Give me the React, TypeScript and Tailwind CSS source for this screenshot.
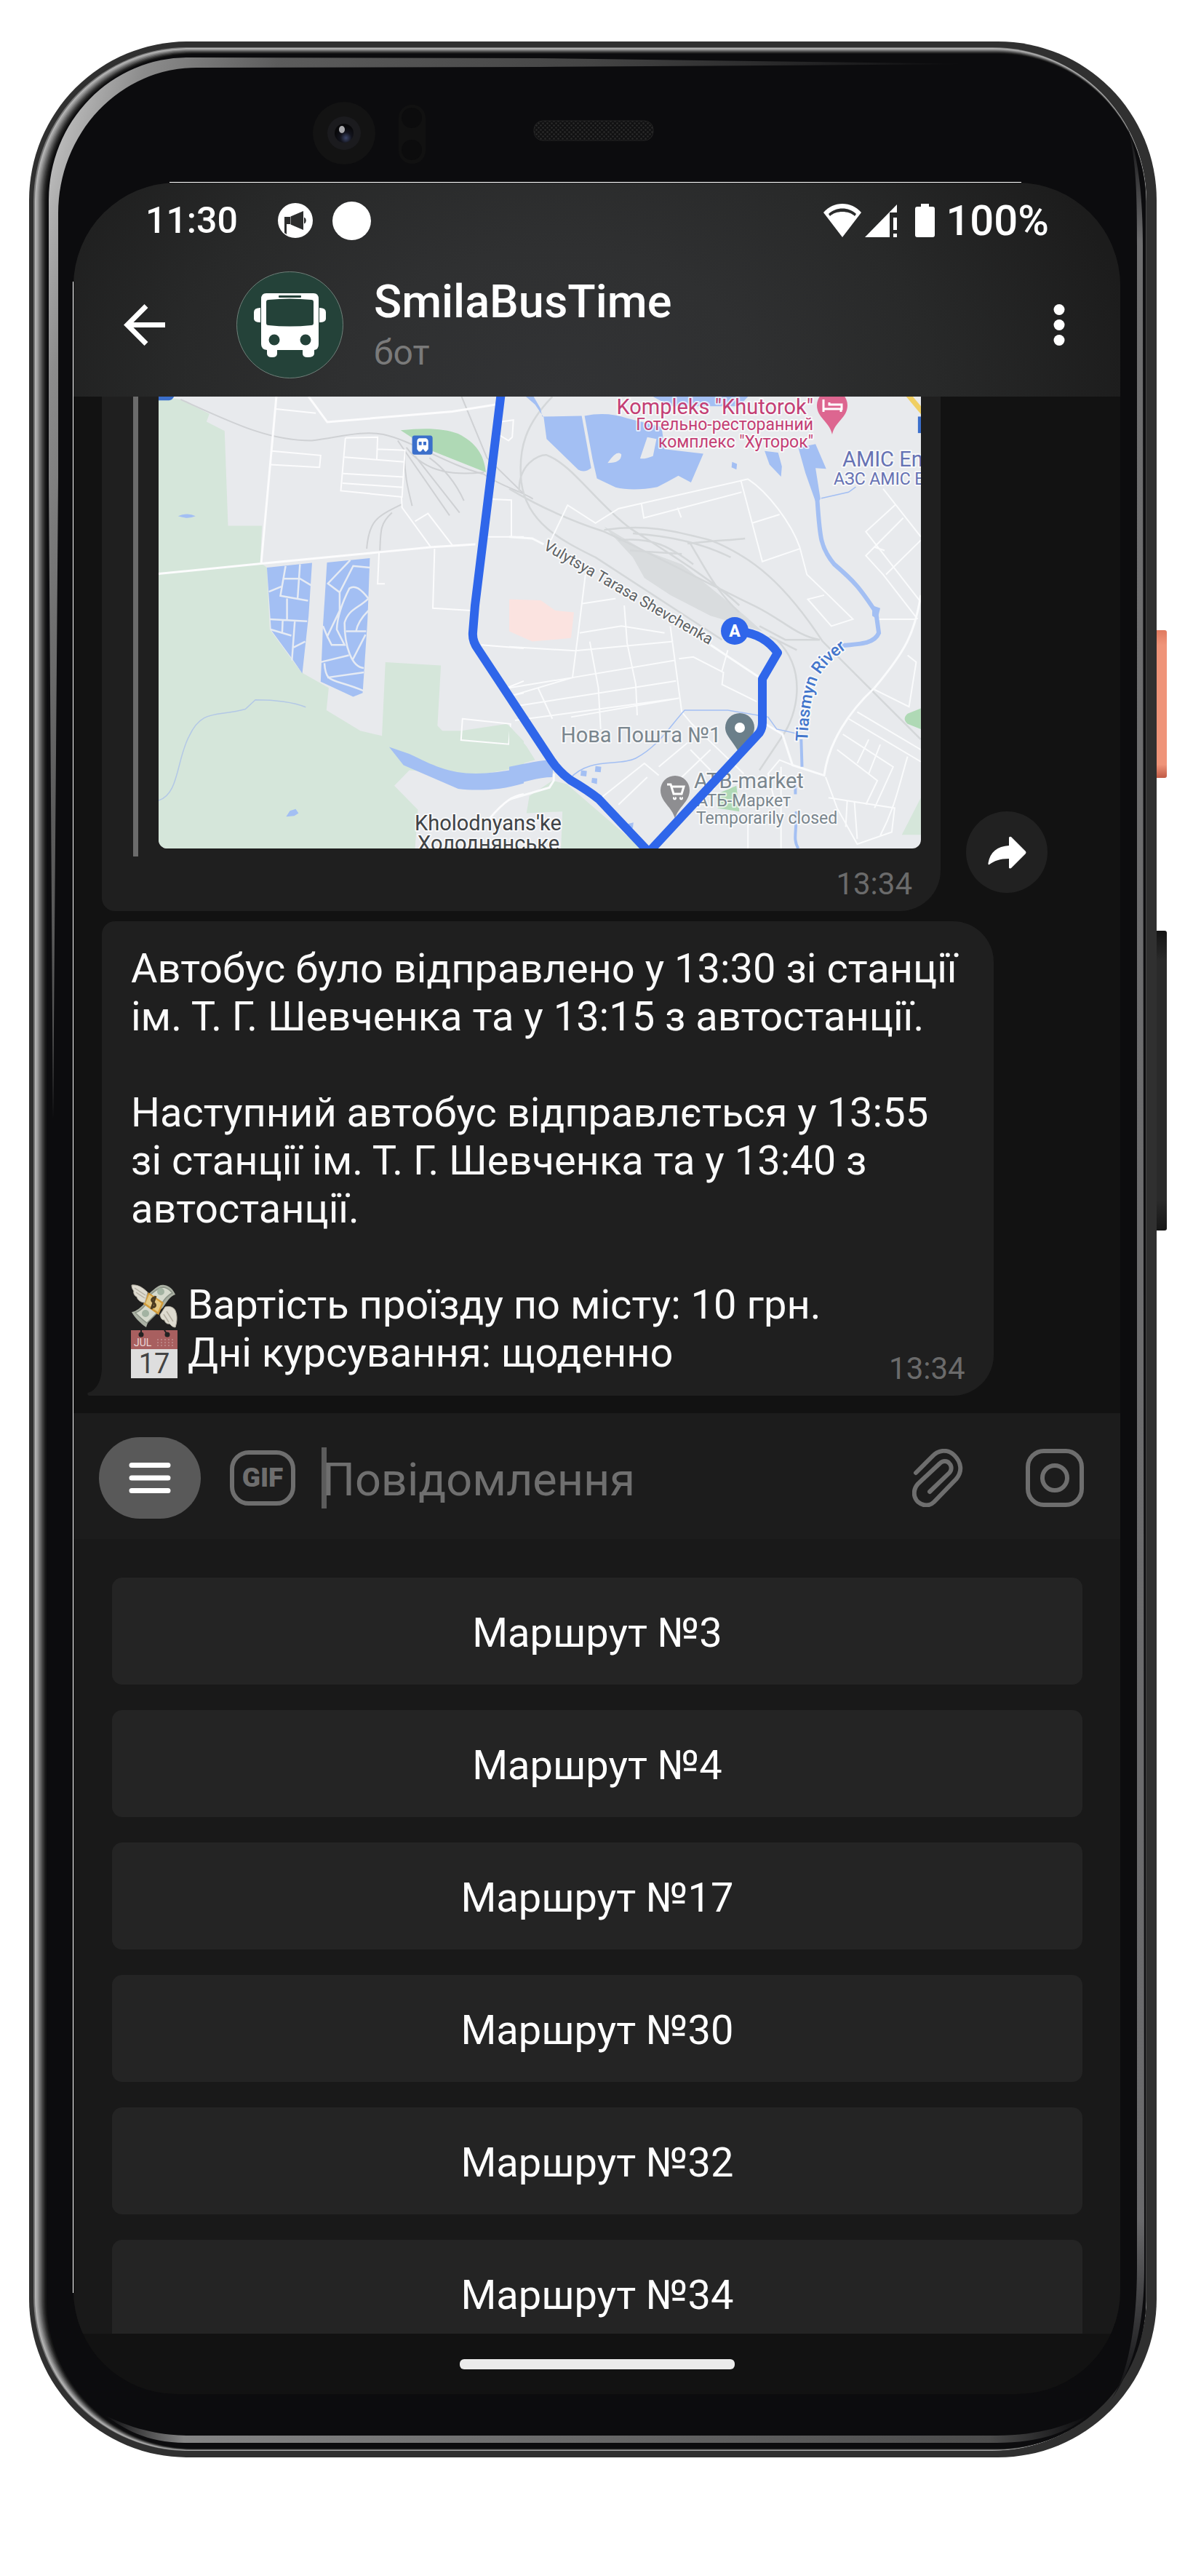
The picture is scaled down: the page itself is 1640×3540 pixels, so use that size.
import type { ReactNode } from "react";

const routes = ["3", "4", "17", "30", "32", "34"];

/* Concentric layers that shade the rim of the glass from light metal to black. */
const rimShades = [
  "#777777", "#b4b4b4", "#a2a2a2", "#8a8a8a", "#6f6f6f", "#555555", "#3c3c3c", "#262626", "#161616", "#0c0c0e",
];

function DeviceShell() {
  return (
    <svg
      className="absolute inset-0 h-full w-full"
      viewBox="0 0 1550 3320"
      preserveAspectRatio="none"
      aria-hidden="true"
    >
      <defs>
        <linearGradient id="glossLeft" gradientUnits="userSpaceOnUse" x1="0" y1="0" x2="1193" y2="358">
          <stop offset="0.06" stopColor="#bcbcbc" />
          <stop offset="0.13" stopColor="#8c8c8c" />
          <stop offset="0.27" stopColor="#5c5c5c" />
          <stop offset="0.6" stopColor="#454545" />
          <stop offset="1" stopColor="#0c0c0e" />
        </linearGradient>
        <linearGradient id="glossBottom" x1="0" x2="1" y1="0" y2="0">
          <stop offset="0" stopColor="#0c0c0e" />
          <stop offset="0.08" stopColor="#858585" />
          <stop offset="0.9" stopColor="#4c4c4c" />
          <stop offset="1" stopColor="#0c0c0e" />
        </linearGradient>
        <linearGradient id="glossRight" x1="0" x2="0" y1="0" y2="1">
          <stop offset="0" stopColor="#0c0c0e" />
          <stop offset="0.05" stopColor="#6e6e6f" />
          <stop offset="0.92" stopColor="#6a6a6c" />
          <stop offset="1" stopColor="#0c0c0e" />
        </linearGradient>
        <radialGradient id="lens" cx="0.6" cy="0.75" r="0.6">
          <stop offset="0" stopColor="#3c4668" />
          <stop offset="0.5" stopColor="#12131c" />
          <stop offset="1" stopColor="#08080a" />
        </radialGradient>
        <pattern id="mesh" width="6" height="6" patternUnits="userSpaceOnUse">
          <rect width="6" height="6" fill="#111112" />
          <circle cx="1.5" cy="1.5" r="1.3" fill="#2a2a2a" />
          <circle cx="4.5" cy="4.5" r="1.3" fill="#2a2a2a" />
        </pattern>
      </defs>
      {rimShades.map((shade, i) => (
        <rect
          key={shade}
          x={6 + 2 * i}
          y={8 + i}
          width={1530 - 2 * i - i / 9}
          height={3303 - i - i / 3}
          rx={212 - i}
          fill={shade}
        />
      ))}
      <path
        d="M33 1480L27 600V218A191 196 0 0 1 218 22L700 23L1300 31L700 35L230 36A190 200 0 0 0 40 236V600Z"
        fill="url(#glossLeft)"
      />
      <path
        d="M1510 118C1522 160 1523 210 1523 280V3060C1523 3140 1510 3210 1486 3243C1518 3200 1533 3140 1533 3060L1531 280C1531 200 1522 150 1510 118Z"
        fill="url(#glossRight)"
      />
      <path
        d="M104 3262C150 3285 190 3290 220 3290H1330C1390 3290 1430 3275 1455 3262C1430 3285 1390 3300 1330 3300H215C160 3300 130 3280 104 3262Z"
        fill="url(#glossBottom)"
      />
      <circle cx="433" cy="126" r="43" fill="#131313" />
      <circle cx="433" cy="126" r="23" fill="#1b1b1e" />
      <circle cx="433" cy="126" r="13" fill="url(#lens)" />
      <ellipse cx="430" cy="121" rx="4" ry="5" fill="#a9a9ac" />
      <rect x="508" y="87" width="37" height="81" rx="18" fill="#111111" />
      <circle cx="526" cy="105" r="14" fill="#0c0c0d" />
      <circle cx="526" cy="149" r="14" fill="#0c0c0d" />
      <rect x="694" y="109" width="164" height="27" rx="12" fill="url(#mesh)" stroke="#232323" />
      <rect x="193" y="193" width="1171" height="1" fill="#ffffff" />
      <rect x="60" y="330" width="1" height="2764" fill="#ffffff" />
    </svg>
  );
}

function StatusBar() {
  return (
    <div className="flex items-center pt-[20px] pr-[98px] pl-[99px] font-medium text-white">
      <span className="w-[182px] text-[50px] leading-[64px]">11:30</span>
      <svg className="mr-[27px] h-[48px] w-[48px]" viewBox="0 0 48 48" aria-hidden="true">
        <circle cx="24" cy="24" r="24" fill="#fff" />
        <path d="M9 19H17V29H12V43L9 41Z" fill="#2c2d2d" />
        <path d="M17.500 18.500L35 11V37L17.500 29.500Z" fill="#2c2d2d" />
        <path d="M36 19.500A5 5 0 0 1 36 28.500Z" fill="#2c2d2d" />
      </svg>
      <span className="h-[53px] w-[53px] rounded-full bg-white" />
      <div className="ml-auto flex items-center">
        <svg className="h-[46px] w-[52px]" viewBox="0 0 52 46" aria-hidden="true">
          <path d="M26 0C16 0 7 4 0 12L26 46L52 12C45 4 36 0 26 0Z" fill="#fff" />
          <path d="M7 14C17 4 35 4 45 14L43 17C35 9 17 9 9 17Z" fill="#2b2c2c" />
        </svg>
        <svg className="ml-[5px] h-[46px] w-[45px]" viewBox="0 0 45 46" aria-hidden="true">
          <path d="M0 46L44 1V12H34V46Z" fill="#fff" />
          <path d="M39 19H44V36H39ZM39 41H44V46H39Z" fill="#fff" />
        </svg>
        <svg className="ml-[24px] h-[46px] w-[27px]" viewBox="0 0 27 46" aria-hidden="true">
          <path d="M8 0H19V4H24Q27 4 27 7V43Q27 46 24 46H3Q0 46 0 43V7Q0 4 3 4H8Z" fill="#fff" />
        </svg>
        <span className="ml-[15px] text-[58px] leading-[64px]">100%</span>
      </div>
    </div>
  );
}

function BusAvatar() {
  return (
    <svg className="h-[147px] w-[147px] shrink-0" viewBox="0 0 147 147" role="img" aria-label="SmilaBusTime">
      <circle cx="73.500" cy="73.500" r="73" fill="#244239" stroke="#6f7f79" />
      <path
        fill="#fff"
        d="M41 30H106Q113 30 113 38V100Q113 107 107 108V113Q107 118 98 118Q91 118 91 113V108H56V113Q56 118 49 118Q42 118 42 113V108Q34 107 34 100V38Q34 30 41 30Z"
      />
      <path fill="#fff" d="M33 50Q24 50 24 56V65Q24 70 33 70ZM114 50Q123 50 123 56V65Q123 70 114 70Z" />
      <path fill="#244239" d="M44 39Q73 36 103 39Q106 39 106 42V71Q106 74 103 74Q73 77 44 74Q41 74 41 71V42Q41 39 44 39Z" />
      <rect x="58" y="33" width="31" height="3" rx="1" fill="#244239" />
      <circle cx="52" cy="94" r="7.500" fill="#244239" />
      <circle cx="95" cy="94" r="7.500" fill="#244239" />
    </svg>
  );
}

function ChatHeader() {
  return (
    <header className="bg-[radial-gradient(56%_200%_at_46%_100%,#323335_0%,#2f3031_35%,#282929_65%,#1c1c1c_100%)] pb-[25px]">
      <StatusBar />
      <div className="flex items-center pt-[38px] pr-[74px] pl-[69px]">
        <button type="button" aria-label="Назад" className="mr-[98px] h-[57px] w-[57px]">
          <svg viewBox="0 0 57 57" fill="none" stroke="#fff" strokeWidth="7" aria-hidden="true">
            <path d="M57 28.500H6M31 2.500L5 28.500L31 54.500" />
          </svg>
        </button>
        <BusAvatar />
        <div className="ml-[42px] flex-1">
          <h1 className="text-[63px] leading-[76px] font-medium text-white">SmilaBusTime</h1>
          <p className="text-[48px] leading-[64px] text-[#7a7a7a]">бот</p>
        </div>
        <button type="button" aria-label="Меню чату" className="h-[57px] w-[20px]">
          <svg viewBox="0 0 20 57" fill="#fff" aria-hidden="true">
            <circle cx="10" cy="7.500" r="7.500" />
            <circle cx="10" cy="28.500" r="7.500" />
            <circle cx="10" cy="49.500" r="7.500" />
          </svg>
        </button>
      </div>
    </header>
  );
}

/* West half of the city: fields, ponds and the streets around the station. */
function MapWest() {
  return (
    <g transform="translate(-118 -15) scale(0.3954 0.4719)" fill="none">
      <path
        fill="#d5e6da"
        d="M298 32L375 40L475 82L465 105L528 132L540 408H658L652 515L675 530L685 710L795 835L890 880L882 945L1000 1005L1075 1020L1087 805L1280 815L1268 990L1285 1005H1350L1510 985L1568 1035V1110L1400 1135L1170 1120L1118 1165L1200 1235L1190 1348H298Z"
      />
      <path fill="#afd9b5" d="M1140 130C1230 122 1290 125 1340 140C1400 165 1430 200 1436 252L1250 190Z" />
      <g stroke="#cfd1d4" strokeWidth="2">
        <path vectorEffect="non-scaling-stroke" d="M375 40C560 110 680 160 830 160C930 150 1000 130 1080 142C1180 160 1300 230 1430 258C1480 290 1568 310 1600 330" />
        <path vectorEffect="non-scaling-stroke" d="M1130 160L1310 378M1190 205L1345 370M1240 210C1290 240 1330 280 1360 335M1160 180C1230 260 1340 260 1430 252M1352 32L1440 210L1568 315M1155 190C1150 250 1165 300 1180 350M1145 345C1060 380 1030 390 1022 475M1110 370C1070 400 1070 420 1068 480" />
      </g>
      <g stroke="#fcfcfd" strokeWidth="2">
        <path vectorEffect="non-scaling-stroke" strokeWidth="3" d="M298 548L655 518L1065 485L1250 470L1400 462M655 518L708 32M820 32L885 106L1320 75L1470 55" />
        <path vectorEffect="non-scaling-stroke" d="M706 68L845 80M692 190L862 203L858 238L688 230M948 152L1060 150L1057 215M948 152L932 306L1145 324L1155 188L1058 185M945 208L1152 222M940 256L1150 266M938 284L1148 296M1143 325L1145 355L1245 470M1190 395L1235 372L1320 465M1065 485L1060 577H1085M1258 475L1252 648L1385 655M1435 440H1568M1445 330L1525 333V440M1420 755L1568 765M1355 970L1522 985L1516 1044L1350 1032ZM1490 105L1532 100L1528 150L1515 160L1485 145M1510 880L1568 860M1540 900L1568 895" />
        <path vectorEffect="non-scaling-stroke" strokeWidth="3" d="M1450 1260C1500 1210 1530 1195 1568 1190" />
      </g>
      <g fill="#a3bff3">
        <path d="M675 530L832 516L820 670L798 838L763 795L690 712Z" />
        <path d="M884 515L1033 502L1025 680L1008 895L975 906L862 862L870 700Z" />
        <path d="M1100 1052L1170 1072C1290 1120 1350 1150 1568 1112V1158C1480 1180 1400 1180 1340 1174L1150 1105Z" />
        <path d="M366 380Q400 368 427 380Q400 390 366 380ZM742 1255L755 1238L775 1233L785 1245L770 1253Z" />
      </g>
      <g stroke="#e6ebf3" strokeWidth="2.500">
        <path vectorEffect="non-scaling-stroke" d="M740 525L722 612L818 626M790 520L782 618M735 562H790L830 582M682 600L725 585M745 620V680M685 680L815 686M730 682L728 722M688 710L760 728M772 686L762 800M768 762L808 745" />
        <path vectorEffect="non-scaling-stroke" d="M885 578L965 508M885 575L928 602L975 525L1033 530M928 602V655L885 730L870 700M885 730L900 755H945L918 710C920 660 950 610 962 590C980 580 1000 590 1028 620M950 715H1020M945 690C960 650 990 650 1028 620M945 690C945 760 970 820 1012 822M985 715C990 690 1010 670 1028 655M862 805L960 785M972 800L1018 725M875 808C880 870 900 850 1010 888M885 850L1012 835" />
      </g>
      <path vectorEffect="non-scaling-stroke" stroke="#b3c8e6" strokeWidth="1.500" d="M298 1208C370 1190 360 1090 405 1020C450 940 500 965 600 942L635 915C700 915 760 920 810 936" />
      <rect x="1180" y="145" width="71" height="56" rx="8" fill="#3b6fcb" />
      <path fill="#fff" d="M1204 153H1228Q1236 155 1236 163V185L1229 192H1225L1218 184L1210 192H1203L1197 185V163Q1197 155 1204 153Z" />
      <path fill="#3b6fcb" d="M1203 163H1213V173H1203ZM1219 163H1229V173H1219Z" />
      <path fill="#3b6fcb" d="M298 32H352Q345 43 335 43H298Z" />
    </g>
  );
}

/* East half: the rail yard, the lake and the Tiasmyn river. */
function MapEast() {
  return (
    <g transform="translate(482 -15) scale(0.3954 0.4719)" fill="none">
      <path fill="#d5e6da" d="M0 990L60 1050L90 1090L0 1112ZM150 1150L200 1160L460 1348H180L185 1240L60 1245L70 1195ZM1431 1200V1308H1365Z" />
      <path fill="#afd9b5" d="M1431 940L1385 955Q1365 970 1385 985L1431 1000ZM720 1190L790 1165L800 1240L725 1230Z" />
      <path fill="#fbe3e0" d="M0 622L110 625L160 655L225 660L215 735L80 745L0 715Z" />
      <path
        fill="#d9dcde"
        d="M330 410L470 480L600 520L820 670L880 715L700 670L560 610L470 560L430 500Z"
      />
      <g stroke="#d4d7d9" strokeWidth="2.500">
        <path vectorEffect="non-scaling-stroke" d="M0 300C80 340 200 390 330 425C450 470 650 560 850 640C950 680 1000 730 1080 740M35 310C30 230 100 200 130 202C220 230 300 340 420 415C520 470 700 560 800 640M150 32C60 110 30 180 42 280C60 400 180 450 300 500L740 740M330 420C500 400 600 430 700 450C850 500 960 580 1090 745L1431 1030M380 450C500 440 560 470 640 520M420 480L600 490M430 430C600 440 700 470 770 500M620 460C720 450 770 450 820 445M630 460C680 530 720 600 800 660M870 700L960 740H1080M930 740C1040 830 1000 960 950 1020L870 1120M905 730L1000 770" />
      </g>
      <g stroke="#fafbfc" strokeWidth="2">
        <path vectorEffect="non-scaling-stroke" strokeWidth="3" d="M0 440L80 445L120 462M700 755L870 850M890 985L950 1015L985 1105L1095 1135C1110 1040 1180 950 1270 880C1380 770 1410 720 1431 610M0 1205L140 1170L155 1150V1130" />
        <path vectorEffect="non-scaling-stroke" d="M145 450L203 348L300 400L380 358L830 272C900 310 980 400 1010 470L1035 550L1110 610L1195 680L1120 700L1038 622L1095 610M805 275L880 512L1010 475M845 400L940 375M460 345L468 385L808 310M585 355L598 384M1300 300L1431 440M1345 345L1240 425L1431 630M1370 385L1240 495L1300 550L1420 680M1270 470L1305 480M1310 550L1431 450M1280 680H1415M1385 785L1415 805L1390 935L1270 885" />
        <path vectorEffect="non-scaling-stroke" d="M265 550L240 720L220 850L0 905M250 635L370 620M245 720L390 700L540 720M400 640L410 750L440 870L445 960M0 880L220 850L575 800M10 935L580 860M20 975L590 910L215 965M0 760L230 772L570 745M280 745L310 880L318 1000M100 880L150 970M560 700L600 950L635 985L815 1130M590 795L640 790L745 835L740 870L860 920M760 770L740 830M320 1200L470 1100L520 1135M520 1110L620 1040M600 1140L700 1060M380 1220L480 1140M630 1060L700 1120" />
        <path vectorEffect="non-scaling-stroke" d="M1180 970L1431 1095M1210 950L1431 1060M1160 1015L1335 1110L1270 1230M1140 1060L1280 1150L1240 1220M1110 1200L1340 1230L1330 1300L1210 1335L1140 1230L1100 1140M1385 1080C1350 1180 1340 1230 1290 1310M1175 1210L1170 1285M1200 1210L1210 1320M1250 1030L1210 1100M1290 1045L1250 1130M985 1105L940 1090L900 1130L920 1200M830 1250V1348M945 1110V1348" />
      </g>
      <g fill="#a3bff3">
        <path d="M58 32H85L108 65L115 90L252 88L285 240Q262 255 240 245L130 155L120 92L90 55Z" />
        <path d="M262 88Q340 75 410 95L530 120L540 185L675 198L632 282L588 262Q550 280 515 295Q430 308 370 296L305 270L290 215Z" />
        <path d="M500 32H830L800 60H560ZM888 190L935 195L948 235L945 265L905 230ZM1005 180L1065 170L1102 242L1065 240L1082 330L1068 345L1030 255ZM775 222L792 228L790 244L773 238ZM250 1120L270 1122L268 1138L248 1136ZM300 1108L320 1110L318 1126L298 1124ZM288 1142L306 1144L305 1160L286 1156ZM412 1276L432 1272L430 1288H415Z" />
        <path d="M0 1110C60 1100 110 1090 155 1090L150 1140C100 1140 50 1155 0 1165Z" />
      </g>
      <path fill="#e8eaed" d="M342 225Q375 185 390 200Q390 225 342 225ZM455 212L480 150L512 155L500 205Q470 215 455 212Z" />
      <g stroke="#a3bff3" strokeWidth="4">
        <path vectorEffect="non-scaling-stroke" strokeWidth="6" d="M1070 320C1080 440 1080 470 1130 520C1200 570 1220 590 1275 660L1285 720C1270 750 1230 752 1150 757" />
        <path vectorEffect="non-scaling-stroke" d="M1015 1030L1018 1110M995 1160V1190M998 1240C1000 1300 985 1320 1005 1348" />
        <path vectorEffect="non-scaling-stroke" strokeWidth="1.500" d="M210 1145C280 1080 380 1110 440 1085C520 1050 560 990 610 945H760L900 965L930 1000L1010 1015M1085 328L1180 310L1205 295" />
      </g>
      <path fill="#a3bff3" d="M1262 640L1290 648L1280 680L1262 670Z" />
      <path stroke="#f0cf63" strokeWidth="7" vectorEffect="non-scaling-stroke" d="M1385 25L1440 80" />
      <rect x="1421" y="90" width="12" height="48" fill="#3b6fcb" />
    </g>
  );
}

function RouteMap() {
  return (
    <svg
      className="block w-full rounded-b-[12px]"
      viewBox="0 0 1048 621"
      role="img"
      aria-label="Карта маршруту"
    >
      <rect width="1048" height="621" fill="#e8eaed" />
      <MapWest />
      <MapEast />
      <path d="M799 494C795 478 779 468 779 455A20 20 0 0 1 819 455C819 468 803 478 799 494Z" fill="#6b7f8a" />
      <circle cx="799" cy="455" r="7" fill="#fff" />
      <path d="M710 580C706 564 690 557 690 541A20 20 0 0 1 730 541C730 557 714 564 710 580Z" fill="#8e8e91" />
      <path d="M699 533H704L708 546H719L722 536H706M709 551A1 1 0 1 0 710 551M718 551A1 1 0 1 0 719 551" fill="none" stroke="#fff" strokeWidth="3" />
      <path d="M926 52C922 34 905 29 905 12A21 21 0 0 1 947 12C947 29 930 34 926 52Z" fill="#dd6690" />
      <path d="M914 4V21M914 17H939V11H922V8M938 17V21" fill="none" stroke="#fff" strokeWidth="3" />
      <g
        fontFamily="Roboto, sans-serif"
        stroke="#ffffff"
        strokeOpacity="0.7"
        strokeWidth="4"
        strokeLinejoin="round"
        style={{ paintOrder: "stroke" }}
      >
        <g fill="#c43e74" textAnchor="end">
          <text x="900" y="24" fontSize="29">Kompleks "Khutorok"</text>
          <text x="900" y="46" fontSize="23">Готельно-ресторанний</text>
          <text x="900" y="70" fontSize="23">комплекс "Хуторок"</text>
        </g>
        <g fill="#6672b4">
          <text x="940" y="96" fontSize="29">AMIC En</text>
          <text x="928" y="121" fontSize="23">АЗС AMIC E</text>
        </g>
        <g fill="#7a868e">
          <text x="553" y="475" fontSize="29">Нова Пошта №1</text>
          <text x="736" y="538" fontSize="29">ATB-market</text>
          <text x="740" y="563" fontSize="23">АТБ-Маркет</text>
          <text x="739" y="587" fontSize="23">Temporarily closed</text>
        </g>
        <g fill="#404346">
          <text x="352" y="596" fontSize="29">Kholodnyans'ke</text>
          <text x="356" y="624" fontSize="29">Холоднянське</text>
        </g>
        <text transform="translate(528 209) rotate(30)" fontSize="21" fill="#5d6164">Vulytsya Tarasa Shevchenka</text>
        <path id="riverLine" d="M892 474C894 434 898 405 906 388C914 371 930 356 966 332" fill="none" stroke="none" />
        <text fontSize="23" fontWeight="500" fill="#4376cc">
          <textPath href="#riverLine">Tiasmyn River</textPath>
        </text>
      </g>
      <path
        d="M471 -6L435 287L432 324Q431 336 439 347L540 500Q550 515 566 527Q590 541 605 553L674 626L826 462Q830 456 830 448V388L851 352Q832 326 800 323"
        fill="none"
        stroke="#2f66ea"
        strokeWidth="12"
        strokeLinejoin="round"
      />
      <circle cx="792" cy="322" r="19" fill="#2f66ea" />
      <text x="792" y="330" textAnchor="middle" fontFamily="Roboto, sans-serif" fontWeight="800" fontSize="23" fill="#fff">A</text>
    </svg>
  );
}

function MoneyIcon() {
  return (
    <svg className="inline-block h-[62px] w-[64px] align-[-14px]" viewBox="0 0 64 62" role="img" aria-label="Гроші">
      <path d="M22 16C32 8 38 0 46 2C53 3 58 8 61 15C54 17 50 24 44 33L26 48C24 52 22 56 21 60C12 54 5 46 1 39C8 38 14 32 20 26Z" fill="#aab0a3" />
      <path d="M27 15C34 9 39 5 45 5C51 6 54 9 57 13C50 16 46 22 42 28ZM20 29L36 40L22 54C16 50 11 45 6 40C12 38 16 34 20 29Z" fill="#d5d9cc" stroke="#8b9387" strokeWidth="1.500" />
      <circle cx="41" cy="11" r="5" fill="#a3b3a2" />
      <circle cx="20" cy="41" r="5" fill="#a3b3a2" />
      <path d="M24 12L45 26L38 43L17 28Z" fill="#d19b3b" />
      <path d="M25 15L42 27L37 39L20 27Z" fill="#e3c985" />
      <path d="M34 20C30 18 27 22 30 25L33 28C35 31 31 34 28 31M34 17L28 35" fill="none" stroke="#4a3b20" strokeWidth="3" />
      <path d="M1 2C9 1 16 5 23 12L19 26C13 26 9 22 8 18C5 17 3 13 4 10C2 8 1 5 1 2Z" fill="#dedbd0" stroke="#b5b0a2" />
      <path d="M5 6L20 16M7 12L19 20" stroke="#b5b0a2" strokeWidth="1.500" />
      <path d="M47 32C54 30 61 33 62 40C64 46 63 54 61 60C57 60 55 57 53 55C49 56 47 53 46 50C42 50 41 47 40 43Z" fill="#dedbd0" stroke="#b5b0a2" />
      <path d="M49 38L58 52M45 42L52 53" stroke="#b5b0a2" strokeWidth="1.500" />
    </svg>
  );
}

function CalendarIcon() {
  return (
    <svg className="inline-block h-[66px] w-[64px] align-[-16px]" viewBox="0 0 64 66" role="img" aria-label="Календар, JUL 17">
      <rect width="64" height="66" fill="#dedede" />
      <rect width="64" height="26" fill="#a85f5f" />
      <circle cx="14" cy="6" r="3.500" fill="#222" />
      <circle cx="50" cy="6" r="3.500" fill="#222" />
      <path d="M14 0V6M46 0L50 6" stroke="#222" strokeWidth="2" />
      <path d="M36 13H61M36 17H61M36 21H61" stroke="#bb8383" strokeWidth="2" strokeDasharray="2 3" />
      <text x="4" y="22" fontFamily="Roboto, sans-serif" fontSize="14" fill="#ead7d7">JUL</text>
      <text x="32" y="59" textAnchor="middle" fontFamily="Roboto, sans-serif" fontSize="38" fill="#444">17</text>
    </svg>
  );
}

function Bubble({ className, children }: { className: string; children: ReactNode }) {
  return <article className={`relative bg-[#1f1f1f] ${className}`}>{children}</article>;
}

function Conversation() {
  return (
    <section className="flex flex-col gap-[14px] bg-[#121212] pb-[24px] pl-[39px]" aria-label="Повідомлення чату">
      <div className="flex items-end gap-[35px] pr-[100px]">
        <Bubble className="min-w-0 flex-1 rounded-br-[56px] rounded-bl-[18px] pr-[27px] pb-[10px] pl-[43px]">
          <div className="border-l-[7px] border-[#6b6b6b] pb-[11px] pl-[28px]">
            <RouteMap />
          </div>
          <time className="block pr-[12px] pt-[11px] text-right text-[42px] leading-[54px] text-[#6b6b6b]">13:34</time>
        </Bubble>
        <button
          type="button"
          aria-label="Переслати"
          className="mb-[25px] flex h-[112px] w-[112px] shrink-0 items-center justify-center rounded-full bg-[#212121]"
        >
          <svg className="h-[45px] w-[53px]" viewBox="0 0 53 45" fill="#fff" aria-hidden="true">
            <path d="M29 2Q30 0 32 1L52 21Q53 22.500 52 24L32 44Q30 45 29 43.500V31C16 31 9 34 2 39Q0 40 0.500 37C3 22 13 14 29 13Z" />
          </svg>
        </button>
      </div>
      <Bubble className="w-fit rounded-tl-[18px] rounded-r-[56px] pt-[32px] pr-[50px] pb-[26px] pl-[40px]">
        <svg className="absolute bottom-0 -left-[20px] h-[40px] w-[21px]" viewBox="0 0 21 40" fill="#1f1f1f" aria-hidden="true">
          <path d="M21 0H20C20 20 12 33 1 36Q-1 38 2 40H21Z" />
        </svg>
        <p className="text-[56px] leading-[66px] text-[#fafafa]">
          Автобус було відправлено у 13:30 зі станції
          <br />
          ім. Т. Г. Шевченка та у 13:15 з автостанції.
          <br />
          <br />
          Наступний автобус відправлється у 13:55
          <br />
          зі станції ім. Т. Г. Шевченка та у 13:40 з
          <br />
          автостанції.
        </p>
        <p className="mt-[66px] h-[66px] text-[56px] leading-[66px] text-[#fafafa]">
          <MoneyIcon /> Вартість проїзду по місту: 10 грн.
        </p>
        <p className="h-[66px] text-[56px] leading-[66px] text-[#fafafa]">
          <CalendarIcon /> Дні курсування: щоденно
        </p>
        <time className="absolute right-[39px] bottom-[10px] text-[42px] leading-[54px] text-[#6b6b6b]">13:34</time>
      </Bubble>
    </section>
  );
}

function Composer() {
  return (
    <form className="flex items-center bg-[#1c1c1c] pt-[33px] pr-[50px] pb-[28px] pl-[35px]">
      <button
        type="button"
        aria-label="Меню бота"
        className="flex h-[112px] w-[140px] shrink-0 items-center justify-center rounded-full bg-[#595959]"
      >
        <svg className="h-[42px] w-[58px]" viewBox="0 0 58 42" stroke="#fff" strokeWidth="7" strokeLinecap="round" aria-hidden="true">
          <path d="M4 3.500H54M4 21H54M4 38.500H54" />
        </svg>
      </button>
      <button
        type="button"
        aria-label="GIF"
        className="ml-[40px] flex h-[76px] w-[90px] shrink-0 items-center justify-center rounded-[26px] border-[6px] border-[#6e6e6e] text-[37px] font-black text-[#6e6e6e]"
      >
        GIF
      </button>
      <span className="ml-[36px] h-[84px] w-[7px] shrink-0 bg-[#5c5c5c]" />
      <input
        type="text"
        aria-label="Повідомлення"
        placeholder="Повідомлення"
        className="-ml-[6px] h-[84px] min-w-0 flex-1 bg-transparent pt-[6px] text-[63px] text-white outline-none placeholder:text-[#6f6f6f] placeholder:opacity-100"
      />
      <button type="button" aria-label="Прикріпити файл" className="h-[80px] w-[70px] shrink-0">
        <svg viewBox="0 0 70 80" fill="none" stroke="#6e6e6e" strokeWidth="6" strokeLinecap="round" aria-hidden="true">
          <path d="M5 33L27 11C36 1 49 0 58 9C67 18 70 31 60 42L30 73C24 79 15 79 8 73C1 66 1 56 8 48L38 20C42 16 48 16 51 20C55 24 54 30 51 33L24 59" />
        </svg>
      </button>
      <button type="button" aria-label="Камера" className="ml-[86px] h-[80px] w-[80px] shrink-0">
        <svg viewBox="0 0 80 80" fill="none" stroke="#6e6e6e" strokeWidth="6" aria-hidden="true">
          <rect x="3" y="3" width="74" height="74" rx="22" />
          <circle cx="40" cy="40" r="17" />
        </svg>
      </button>
    </form>
  );
}

function Keyboard() {
  return (
    <section className="h-[1092px] overflow-hidden bg-[#191919] pt-[53px] pr-[52px] pl-[53px]" aria-label="Маршрути">
      <div className="flex flex-col gap-[35px]">
        {routes.map((route) => (
          <button
            key={route}
            type="button"
            className="h-[147px] shrink-0 rounded-[14px] bg-[#242424] pt-[4px] text-[56px] leading-[66px] text-white"
          >
            Маршрут №{route}
          </button>
        ))}
      </div>
    </section>
  );
}

export default function App() {
  return (
    <div className="min-h-screen bg-white pt-[57px] pr-[50px] pb-[163px] pl-[40px] font-['Roboto',sans-serif]">
      <main className="relative rounded-[218px] bg-[#303030] pt-[194px] pr-[50px] pb-[87px] pl-[61px]">
        <span className="absolute top-[809px] left-full h-[203px] w-[14px] rounded-r-[3px] bg-[linear-gradient(#e07a60,#ef9479_10%,#ef9479_91%,#c05a45)]" />
        <span className="absolute top-[1222px] left-full h-[412px] w-[14px] rounded-r-[3px] bg-[linear-gradient(#141414,#2a2a2a_10%,#2a2a2a_90%,#161616)]" />
        <DeviceShell />
        <div className="relative overflow-hidden rounded-[142px] bg-[#121212]">
          <ChatHeader />
          <Conversation />
          <Composer />
          <Keyboard />
          <div className="flex justify-center pt-[35px] pb-[34px]">
            <span className="h-[14px] w-[378px] rounded-[6px] bg-[#ebebeb]" />
          </div>
        </div>
      </main>
    </div>
  );
}
